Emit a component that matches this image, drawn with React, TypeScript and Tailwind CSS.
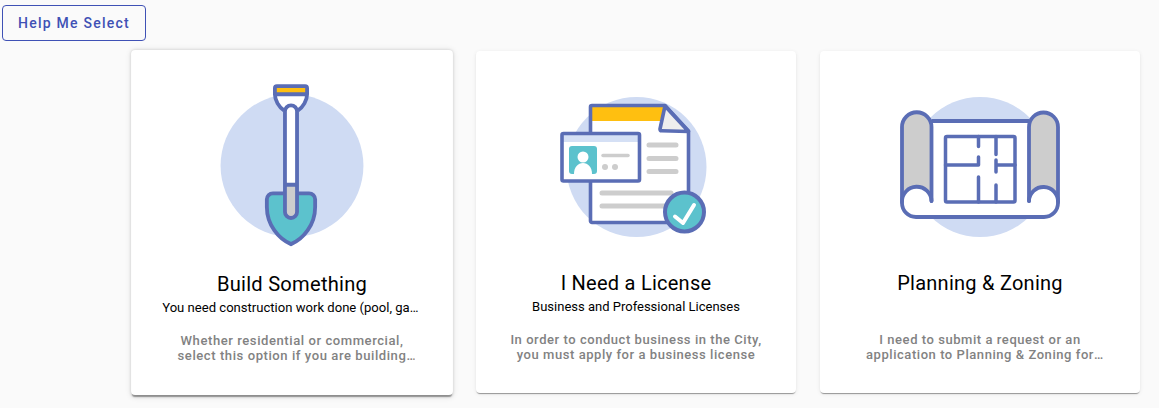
import React from "react";

const STROKE = "#5a6db5";
const TEAL = "#5cc2cd";
const PALE = "#cfdbf3";
const GRAY = "#cdcdcd";
const YELLOW = "#ffbf10";

function ShovelArt() {
  return (
    <svg viewBox="202 80 180 170" className="w-[180px] h-[170px] block" fill="none">
      <circle cx="292" cy="166" r="71" fill={PALE} />
      {/* grip */}
      <path
        d="M275 95V89a2 2 0 0 1 2-2h28a2 2 0 0 1 2 2v6c0 6-4 13-9 16h-14c-5-3-9-10-9-16z"
        fill="#fff"
      />
      <rect x="276" y="88" width="30" height="6" fill={YELLOW} />
      <path
        d="M284 111c-5-3-9-10-9-16V89a2 2 0 0 1 2-2h28a2 2 0 0 1 2 2v6c0 6-4 13-9 16M275 95h32"
        stroke={STROKE}
        strokeWidth="3.8"
        strokeLinejoin="round"
      />
      {/* blade */}
      <path
        d="M273 193.5h36a6 6 0 0 1 6 6V207c0 18-12 32-24 37-12-5-24-19-24-37v-7.500a6 6 0 0 1 6-6z"
        fill={TEAL}
        stroke={STROKE}
        strokeWidth="3.8"
      />
      {/* shaft */}
      <path d="M285 185v27a6 6 0 0 0 12 0v-27z" fill={GRAY} />
      <path d="M285 185v-73a6 6 0 0 1 12 0v73z" fill="#fff" />
      <path
        d="M285 112a6 6 0 0 1 12 0v100a6 6 0 0 1-12 0zM285 185h12"
        stroke={STROKE}
        strokeWidth="3.8"
      />
    </svg>
  );
}

function LicenseArt() {
  return (
    <svg viewBox="546 80 180 170" className="w-[180px] h-[170px] block" fill="none">
      <circle cx="636.500" cy="167" r="70" fill={PALE} />
      {/* document */}
      <path d="M592 105.500h73l23.500 26V221a1.500 1.500 0 0 1-1.500 1.500h-95a1.500 1.500 0 0 1-1.500-1.500V107a1.500 1.500 0 0 1 1.500-1.500z" fill="#fff" />
      <path d="M592 107h73l-5 14h-68z" fill={YELLOW} />
      <path
        d="M665 105.500h-73a1.500 1.500 0 0 0-1.500 1.500v114a1.500 1.500 0 0 0 1.500 1.500h95a1.500 1.500 0 0 0 1.500-1.500v-90z"
        stroke={STROKE}
        strokeWidth="3.6"
        strokeLinejoin="round"
      />
      <path d="M665 106l-5 23a1.500 1.500 0 0 0 1.500 1.800l27 .7z" fill="#eeeeee" stroke={STROKE} strokeWidth="3.6" strokeLinejoin="round" />
      {/* document lines */}
      <g stroke={GRAY} strokeWidth="5" strokeLinecap="round">
        <path d="M649 145h27M649 158.500h27M649 171.500h27M602 193h69M602 206h62" />
      </g>
      {/* id card */}
      <rect x="562" y="133.500" width="77.500" height="47.500" rx="1.500" fill="#fff" />
      <rect x="563" y="135" width="75" height="7" fill="#d5e0f5" />
      <rect x="562" y="133.500" width="77.500" height="47.500" rx="1.500" stroke={STROKE} strokeWidth="3.6" />
      <rect x="569" y="146" width="28" height="28" rx="3" fill={TEAL} />
      <circle cx="583" cy="157" r="5.500" fill="#fff" />
      <path d="M574 174c0-7 4-11 9-11s9 4 9 11z" fill="#fff" />
      <path d="M603 155.500h25" stroke={GRAY} strokeWidth="3.500" strokeLinecap="round" />
      <circle cx="605" cy="167" r="3" fill={GRAY} />
      <circle cx="615" cy="167" r="3" fill={GRAY} />
      {/* check badge */}
      <circle cx="684.500" cy="212" r="19.500" fill={TEAL} stroke={STROKE} strokeWidth="4" />
      <path d="M675 216.500l8 6.500 11-18" stroke="#fff" strokeWidth="4" strokeLinecap="round" strokeLinejoin="round" />
    </svg>
  );
}

function BlueprintArt() {
  return (
    <svg viewBox="890 80 180 170" className="w-[180px] h-[170px] block" fill="none">
      <circle cx="980" cy="167" r="70" fill={PALE} />
      {/* sheet */}
      <path d="M931 121h98v64h29v18a14 14 0 0 1-14 14H916a14 14 0 0 1-14-14v-18h29z" fill="#fff" />
      <path d="M931.500 121h97.500" stroke={STROKE} strokeWidth="3.800" />
      {/* rolls */}
      <path d="M902 202V127a14.750 14.750 0 0 1 29.500 0v74a14.750 14.750 0 0 0-29.500 1z" fill={GRAY} />
      <path d="M1029 201V127a14.500 14.500 0 0 1 29 0v75a14.500 14.500 0 0 0-29-1z" fill={GRAY} />
      <path
        d="M931.500 201V127a14.750 14.750 0 0 0-29.500 0v76a14 14 0 0 0 14 14h128a14 14 0 0 0 14-14v-76a14.500 14.500 0 0 0-29 0v74"
        stroke={STROKE}
        strokeWidth="3.800"
        strokeLinecap="round"
      />
      <path d="M902 202a14.750 14.750 0 0 1 29.500-1M1029 201a14.500 14.500 0 0 1 29 1" stroke={STROKE} strokeWidth="3.800" strokeLinecap="round" />
      {/* floor plan */}
      <g stroke={STROKE} strokeWidth="3.500" strokeLinecap="round" strokeLinejoin="round">
        <rect x="945.500" y="136.500" width="69.500" height="65.500" rx="1.500" />
        <path d="M978.500 136.500v10M996 136.500v18M945.500 165h33v-8M996 165h19M996 160v12M978.500 177v25M996 185v17" />
      </g>
    </svg>
  );
}

const cards = [
  {
    art: <ShovelArt />,
    title: "Build Something",
    subtitle: "You need construction work done (pool, garage, addition, remodel)",
    text: "Whether residential or commercial, select this option if you are building or remodeling a structure on your property",
    raised: true,
  },
  {
    art: <LicenseArt />,
    title: "I Need a License",
    subtitle: "Business and Professional Licenses",
    text: "In order to conduct business in the City, you must apply for a business license",
    raised: false,
  },
  {
    art: <BlueprintArt />,
    title: "Planning & Zoning",
    subtitle: "",
    text: "I need to submit a request or an application to Planning & Zoning for review and approval of a project",
    raised: false,
  },
];

export default function App() {
  return (
    <div className="w-[1159px] h-[408px] overflow-hidden bg-[#fafafa] font-['Roboto',sans-serif]">
      <div className="pt-[5px] pl-[2px]">
        <button
          type="button"
          className="w-[144px] h-[36px] rounded-[4px] border border-[#3f51b5] text-[#3f51b5] text-[14px] font-medium tracking-[1.25px]"
        >
          Help Me Select
        </button>
      </div>
      <div className="flex items-start gap-6 pl-[132px] pt-[10px]">
        {cards.map((card) => (
          <div
            key={card.title}
            className={
              card.raised
                ? "w-[320px] h-[343px] bg-white rounded-[4px] flex flex-col items-center pt-[29px] scale-[1.006] shadow-[0_2px_1px_-1px_rgba(0,0,0,0.3),0_1px_3px_0_rgba(0,0,0,0.14),0_1px_6px_0_rgba(0,0,0,0.1)]"
                : "w-[320px] h-[342px] bg-white rounded-[4px] flex flex-col items-center pt-[29px] shadow-[0_2px_1px_-1px_rgba(0,0,0,0.3),0_1px_1px_0_rgba(0,0,0,0.1),0_1px_4px_0_rgba(0,0,0,0.08)]"
            }
          >
            {card.art}
            <h2
              className={
                card.raised
                  ? "mt-[21px] text-[20px] leading-[26px] font-normal tracking-[0.25px] text-black"
                  : "mt-[20px] text-[20px] leading-[26px] font-normal tracking-[0.25px] text-black"
              }
            >
              {card.title}
            </h2>
            <p
              className={
                card.raised
                  ? "w-[258px] h-[18px] mt-[1px] text-[13px] leading-[18px] text-black text-center truncate"
                  : "w-[258px] h-[18px] mt-[2px] text-[13px] leading-[18px] text-black text-center truncate"
              }
            >
              {card.subtitle}
            </p>
            <p
              className={
                card.raised
                  ? "w-[243px] mt-[16px] text-[13px] leading-[15px] font-medium tracking-[0.55px] text-[#828282] text-center line-clamp-2"
                  : "w-[265.5px] mt-[16px] text-[13px] leading-[15px] font-medium tracking-[0.55px] text-[#828282] text-center line-clamp-2"
              }
            >
              {card.text}
            </p>
          </div>
        ))}
      </div>
    </div>
  );
}
